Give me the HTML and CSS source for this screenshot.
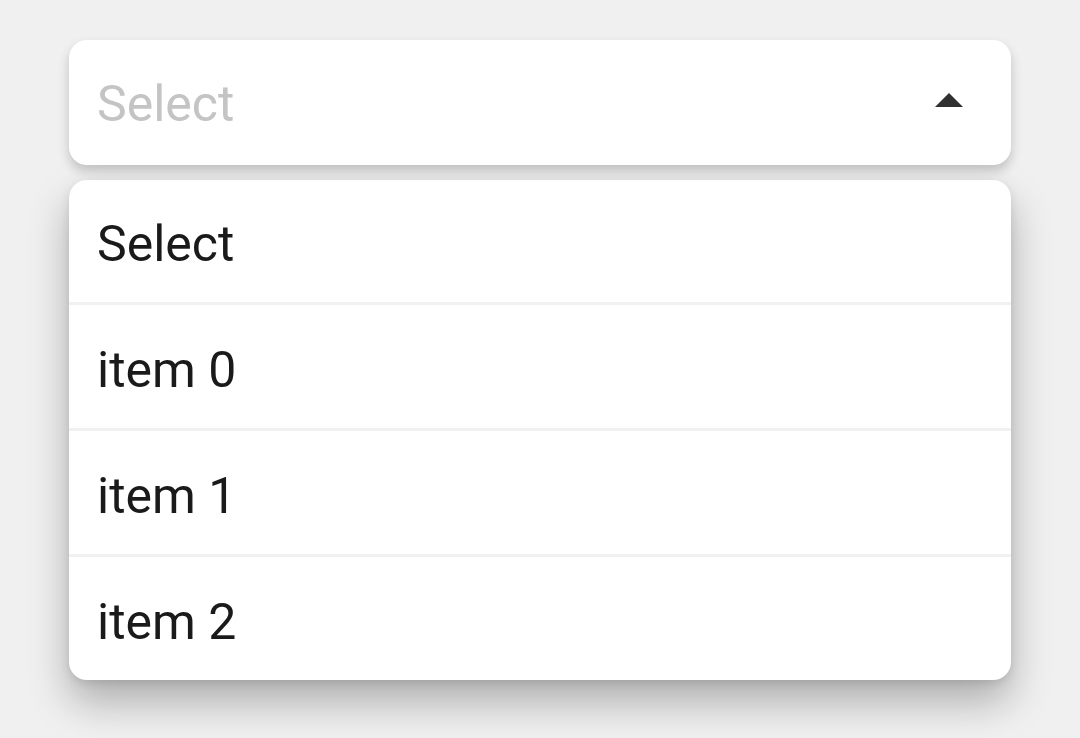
FILE: index.html
```html
<!DOCTYPE html>
<html>
<head>
<meta charset="utf-8">
<link rel="stylesheet" href="styles.css">
</head>
<body>
<div class="wrap">
  <div class="select">
    <span class="placeholder">Select</span>
    <svg class="caret" width="28" height="14" viewBox="0 0 28 14"><path d="M14 0 L28 14 L0 14 Z" fill="#303030"/></svg>
  </div>
  <ul class="menu">
    <li class="item">Select</li>
    <li class="item">item 0</li>
    <li class="item">item 1</li>
    <li class="item">item 2</li>
  </ul>
</div>
</body>
</html>
```

FILE: styles.css
```css
html, body {
  margin: 0;
  padding: 0;
  background: #f0f0f0;
  font-family: Roboto, "Liberation Sans", sans-serif;
}
body {
  min-height: 738px;
}
.wrap {
  padding: 40px 69px 58px 69px;
  display: flex;
  flex-direction: column;
  gap: 15px;
}
.select {
  height: 125px;
  background: #fff;
  border-radius: 18px;
  box-shadow: 0 6px 12px rgba(0,0,0,0.2);
  display: flex;
  align-items: center;
  justify-content: space-between;
  padding: 0 48px 0 28px;
  position: relative;
  z-index: 1;
}
.placeholder {
  font-size: 50px;
  color: #c4c4c4;
  padding-top: 3px;
}
.caret {
  display: block;
  margin-top: -6px;
}
.menu {
  list-style: none;
  margin: 0;
  padding: 0;
  background: #fff;
  border-radius: 18px;
  box-shadow: 0 22px 40px rgba(0,0,0,0.28), 0 3px 10px rgba(0,0,0,0.1);
  overflow: hidden;
}
.item {
  box-sizing: border-box;
  height: 126px;
  display: flex;
  align-items: center;
  padding: 6px 0 0 28px;
  font-size: 50px;
  color: #1a1a1a;
  border-top: 3px solid #f1f1f1;
}
.item:first-child {
  height: 122px;
  border-top: none;
}
```
